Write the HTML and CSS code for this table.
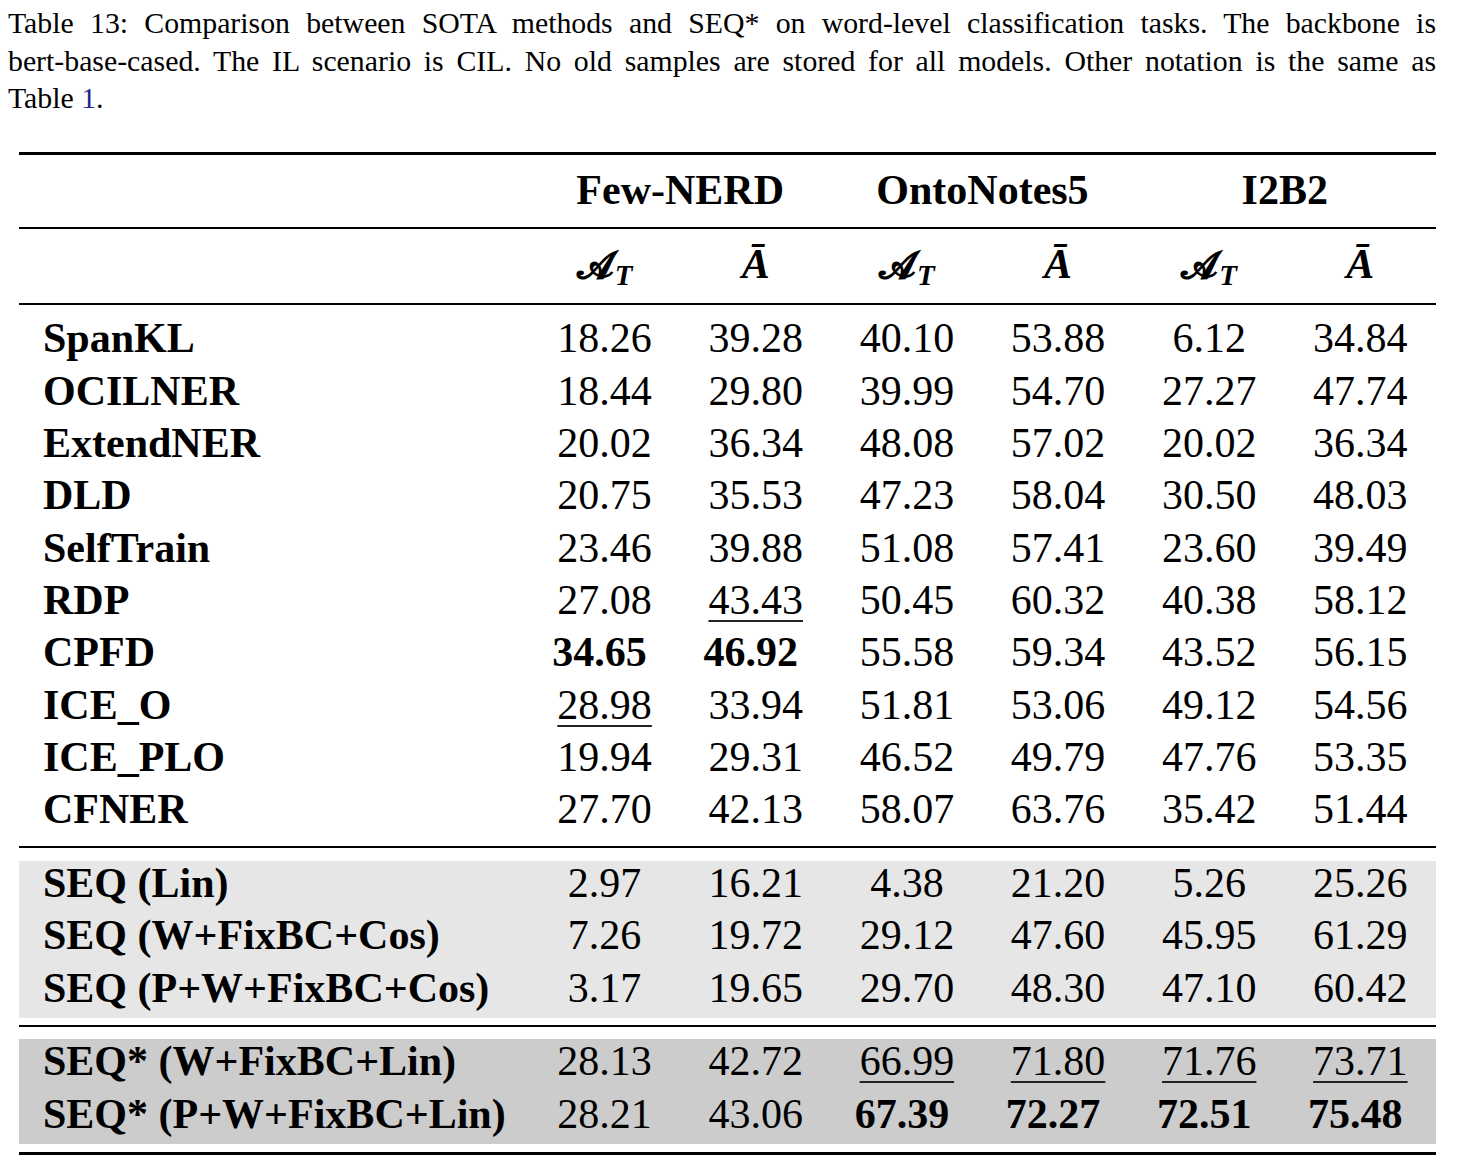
FILE: index.html
```html
<!DOCTYPE html>
<html lang="en">
<head>
<meta charset="utf-8">
<title>Table 13</title>
<link rel="stylesheet" href="styles.css">
</head>
<body>
<div class="page">
  <p class="caption">
    <span class="cap-line">Table 13: Comparison between SOTA methods and SEQ* on word-level classification tasks. The backbone is</span>
    <span class="cap-line">bert-base-cased. The IL scenario is CIL. No old samples are stored for all models. Other notation is the same as</span>
    <span class="cap-line last">Table <span class="ref">1</span>.</span>
  </p>

  <div class="tbl">
    <div class="row head1">
      <div class="lab"></div>
      <div class="span2">Few-NERD</div>
      <div class="span2">OntoNotes5</div>
      <div class="span2">I2B2</div>
    </div>
    <div class="row head2">
      <div class="lab"></div>
      <div class="num"><span class="cal">𝓐</span><span class="sub">T</span></div>
      <div class="num"><span class="abar">Ā</span></div>
      <div class="num"><span class="cal">𝓐</span><span class="sub">T</span></div>
      <div class="num"><span class="abar">Ā</span></div>
      <div class="num"><span class="cal">𝓐</span><span class="sub">T</span></div>
      <div class="num"><span class="abar">Ā</span></div>
    </div>

    <div class="group plain">
      <div class="row body"><div class="lab">SpanKL</div><div class="num">18.26</div><div class="num">39.28</div><div class="num">40.10</div><div class="num">53.88</div><div class="num">6.12</div><div class="num">34.84</div></div>
      <div class="row body"><div class="lab">OCILNER</div><div class="num">18.44</div><div class="num">29.80</div><div class="num">39.99</div><div class="num">54.70</div><div class="num">27.27</div><div class="num">47.74</div></div>
      <div class="row body"><div class="lab">ExtendNER</div><div class="num">20.02</div><div class="num">36.34</div><div class="num">48.08</div><div class="num">57.02</div><div class="num">20.02</div><div class="num">36.34</div></div>
      <div class="row body"><div class="lab">DLD</div><div class="num">20.75</div><div class="num">35.53</div><div class="num">47.23</div><div class="num">58.04</div><div class="num">30.50</div><div class="num">48.03</div></div>
      <div class="row body"><div class="lab">SelfTrain</div><div class="num">23.46</div><div class="num">39.88</div><div class="num">51.08</div><div class="num">57.41</div><div class="num">23.60</div><div class="num">39.49</div></div>
      <div class="row body"><div class="lab">RDP</div><div class="num">27.08</div><div class="num"><span class="ul">43.43</span></div><div class="num">50.45</div><div class="num">60.32</div><div class="num">40.38</div><div class="num">58.12</div></div>
      <div class="row body"><div class="lab">CPFD</div><div class="num best">34.65</div><div class="num best">46.92</div><div class="num">55.58</div><div class="num">59.34</div><div class="num">43.52</div><div class="num">56.15</div></div>
      <div class="row body"><div class="lab">ICE_O</div><div class="num"><span class="ul">28.98</span></div><div class="num">33.94</div><div class="num">51.81</div><div class="num">53.06</div><div class="num">49.12</div><div class="num">54.56</div></div>
      <div class="row body"><div class="lab">ICE_PLO</div><div class="num">19.94</div><div class="num">29.31</div><div class="num">46.52</div><div class="num">49.79</div><div class="num">47.76</div><div class="num">53.35</div></div>
      <div class="row body"><div class="lab">CFNER</div><div class="num">27.70</div><div class="num">42.13</div><div class="num">58.07</div><div class="num">63.76</div><div class="num">35.42</div><div class="num">51.44</div></div>
    </div>

    <div class="group light">
      <div class="row body"><div class="lab">SEQ (Lin)</div><div class="num">2.97</div><div class="num">16.21</div><div class="num">4.38</div><div class="num">21.20</div><div class="num">5.26</div><div class="num">25.26</div></div>
      <div class="row body"><div class="lab">SEQ (W+FixBC+Cos)</div><div class="num">7.26</div><div class="num">19.72</div><div class="num">29.12</div><div class="num">47.60</div><div class="num">45.95</div><div class="num">61.29</div></div>
      <div class="row body"><div class="lab">SEQ (P+W+FixBC+Cos)</div><div class="num">3.17</div><div class="num">19.65</div><div class="num">29.70</div><div class="num">48.30</div><div class="num">47.10</div><div class="num">60.42</div></div>
    </div>

    <div class="closing">
      <div class="group dark">
        <div class="row body"><div class="lab">SEQ* (W+FixBC+Lin)</div><div class="num">28.13</div><div class="num">42.72</div><div class="num"><span class="ul">66.99</span></div><div class="num"><span class="ul">71.80</span></div><div class="num"><span class="ul">71.76</span></div><div class="num"><span class="ul">73.71</span></div></div>
        <div class="row body"><div class="lab">SEQ* (P+W+FixBC+Lin)</div><div class="num">28.21</div><div class="num">43.06</div><div class="num best">67.39</div><div class="num best">72.27</div><div class="num best">72.51</div><div class="num best">75.48</div></div>
      </div>
    </div>
  </div>
</div>
</body>
</html>
```

FILE: styles.css
```css
html, body {
  margin: 0;
  padding: 0;
  background: #ffffff;
}

body {
  font-family: "Liberation Serif", "Times New Roman", serif;
  color: #000000;
}

.page {
  width: 1458px;
}

.caption {
  margin: 0 0 0 8px;
  padding-top: 4px;
  width: 1428px;
  font-size: 29.8px;
  line-height: 37.5px;
}

.cap-line {
  display: block;
  text-align: justify;
  text-align-last: justify;
}

.cap-line.last {
  text-align-last: left;
}

.ref {
  color: #1f1f8f;
}

.tbl {
  margin: 35.5px 0 0 19px;
  width: 1417px;
  font-size: 42px;
  line-height: 44px;
}

.row {
  display: grid;
  grid-template-columns: 510px repeat(6, 151.1667px);
}

.lab {
  padding-left: 24px;
  font-weight: bold;
  white-space: nowrap;
}

.num {
  text-align: center;
  white-space: nowrap;
}

.head1 {
  border-top: 3px solid #000;
  border-bottom: 2px solid #000;
  padding: 13.1px 0 14.9px;
  font-weight: bold;
}

.span2 {
  grid-column: span 2;
  text-align: center;
}

.head2 {
  border-bottom: 2px solid #000;
  padding: 13.1px 0 15.6px;
}

.cal {
  font-family: "DejaVu Serif", "DejaVu Sans", "Noto Sans", serif;
  font-weight: bold;
  font-size: 38px;
}

.sub {
  display: inline-block;
  font-style: italic;
  font-weight: bold;
  font-size: 29px;
  line-height: 1;
  position: relative;
  top: 7px;
  margin-left: 1px;
}

.abar {
  font-style: italic;
  font-weight: bold;
}

.body {
  padding-bottom: 8.33px;
}

.plain {
  padding: 11.8px 0 6.7px;
  border-bottom: 2px solid #000;
}

.light {
  margin-top: 12.5px;
  background: #e6e6e6;
}

.closing {
  margin-top: 7.5px;
  border-top: 2px solid #000;
  border-bottom: 3px solid #000;
  padding: 12px 0 7.5px;
}

.dark {
  background: #cccccc;
}

.best {
  font-weight: bold;
  padding-right: 10px;
}

.ul {
  text-decoration: underline;
  text-decoration-thickness: 2px;
  text-underline-offset: 6px;
  text-decoration-color: #222222;
}
```
